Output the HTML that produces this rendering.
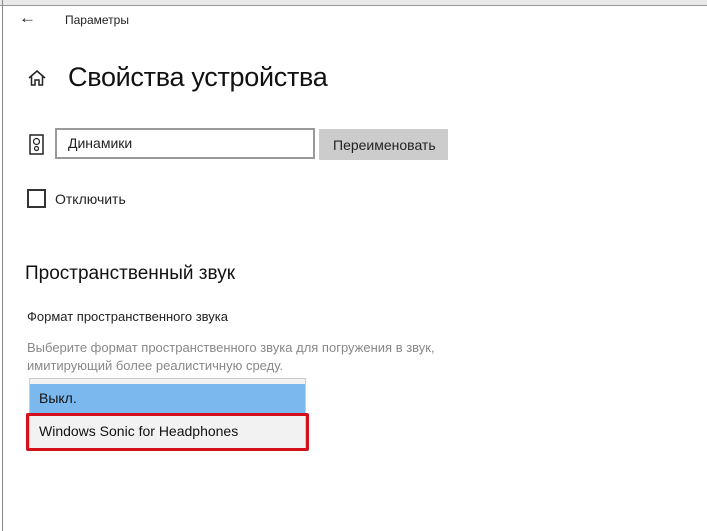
<!DOCTYPE html><html><head><meta charset="utf-8"><style>
body{margin:0;width:707px;height:531px;background:#fff;font-family:"Liberation Sans","Noto Sans CJK SC",sans-serif;position:relative;overflow:hidden;color:#000}
.a{position:absolute;white-space:nowrap}
</style></head><body>
<div class="a" style="left:0;top:0;width:707px;height:5px;background:#e8e8e8;border-bottom:1px solid #999"></div>
<div class="a" style="left:2px;top:0;width:1px;height:531px;background:#888"></div>
<div class="a" style="left:19px;top:8px;font-size:17px;color:#222">&#8592;</div>
<div class="a" style="left:65px;top:13px;font-size:12px;color:#222">Параметры</div>
<svg class="a" style="left:27px;top:68px" width="20" height="20" viewBox="0 0 20 20"><path d="M2 10 L10 3 L18 10 M4.5 8 V17 H8 V12 H12 V17 H15.5 V8" fill="none" stroke="#222" stroke-width="1.5"/></svg>
<div class="a" style="left:68px;top:62px;font-size:27px;color:#111;letter-spacing:-0.3px">Свойства устройства</div>
<svg class="a" style="left:29px;top:134px" width="15" height="21" viewBox="0 0 15 21"><rect x="1" y="1" width="13" height="19" fill="none" stroke="#222" stroke-width="1.5"/><circle cx="7.5" cy="7.5" r="3" fill="none" stroke="#222" stroke-width="1.2"/><circle cx="7.5" cy="14.5" r="2" fill="none" stroke="#222" stroke-width="1.2"/></svg>
<div class="a" style="left:55px;top:128px;width:256px;height:27px;border:2px solid #999;background:#fff"></div>
<div class="a" style="left:68px;top:135px;font-size:14px;color:#222">Динамики</div>
<div class="a" style="left:319px;top:129px;width:129px;height:31px;background:#ccc"></div>
<div class="a" style="left:333px;top:137px;font-size:14px;color:#222">Переименовать</div>
<div class="a" style="left:27px;top:189px;width:19px;height:19px;border:2px solid #333;box-sizing:border-box"></div>
<div class="a" style="left:55px;top:191px;font-size:14px;color:#222">Отключить</div>
<div class="a" style="left:25px;top:263px;font-size:19px;color:#111">Пространственный звук</div>
<div class="a" style="left:27px;top:309px;font-size:13px;color:#222">Формат пространственного звука</div>
<div class="a" style="left:27px;top:339px;font-size:13px;color:#888;line-height:18px">Выберите формат пространственного звука для погружения в звук,<br>имитирующий более реалистичную среду.</div>
<div class="a" style="left:29px;top:378px;width:277px;height:71px;border:1px solid #ccc;box-sizing:border-box;background:#f2f2f2"></div>
<div class="a" style="left:30px;top:384px;width:275px;height:29px;background:#7ab8ee"></div>
<div class="a" style="left:39px;top:390px;font-size:14px;color:#111">Выкл.</div>
<div class="a" style="left:26px;top:413px;width:283px;height:38px;border:3px solid #d3101c;border-radius:2px;box-sizing:border-box"></div>
<div class="a" style="left:39px;top:423px;font-size:14px;color:#111">Windows Sonic for Headphones</div>
</body></html>
